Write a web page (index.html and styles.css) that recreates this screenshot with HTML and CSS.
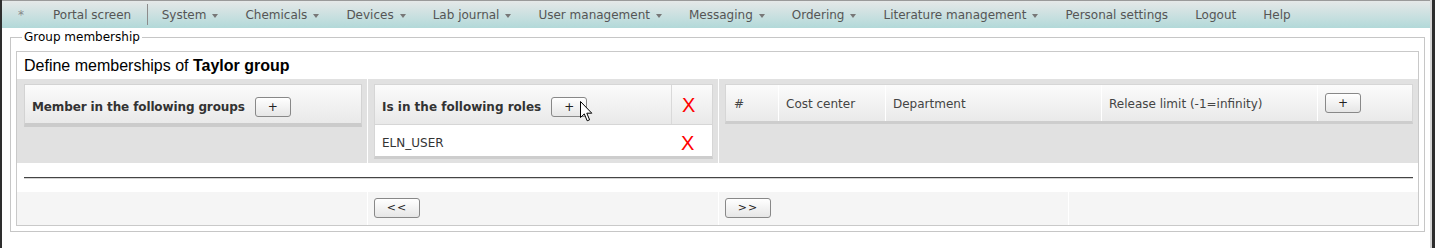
FILE: index.html
```html
<!DOCTYPE html>
<html lang="en">
<head>
<meta charset="utf-8">
<title>Group membership</title>
<link rel="stylesheet" href="styles.css">
</head>
<body>
<div class="frame">
  <div class="screen">
    <nav class="menu">
      <span class="item star">*</span>
      <span class="item portal">Portal screen</span>
      <span class="sep"></span>
      <span class="item">System<i class="caret"></i></span>
      <span class="item">Chemicals<i class="caret"></i></span>
      <span class="item">Devices<i class="caret"></i></span>
      <span class="item">Lab journal<i class="caret"></i></span>
      <span class="item">User management<i class="caret"></i></span>
      <span class="item">Messaging<i class="caret"></i></span>
      <span class="item">Ordering<i class="caret"></i></span>
      <span class="item">Literature management<i class="caret"></i></span>
      <span class="item">Personal settings</span>
      <span class="item">Logout</span>
      <span class="item">Help</span>
    </nav>

    <fieldset class="group">
      <legend>Group membership</legend>
      <div class="box">
        <div class="title">Define memberships of <b>Taylor group</b></div>

        <div class="grid">
          <div class="cell c1">
            <div class="panel">
              <span class="ph">Member in the following groups</span>
              <button class="btn" type="button">+</button>
            </div>
          </div>

          <div class="cell c2">
            <div class="roles">
              <div class="rrow head">
                <div class="rname"><span class="ph">Is in the following roles</span><button class="btn" type="button">+</button></div>
                <div class="rx">X</div>
              </div>
              <div class="rrow body">
                <div class="rname">ELN_USER</div>
                <div class="rx">X</div>
              </div>
            </div>
            <svg class="cursor" viewBox="0 0 13 21" width="13" height="21" aria-hidden="true">
              <path d="M0.5 0.5 L0.5 16.5 L4.3 12.9 L7.2 19.8 L9.6 18.8 L6.8 12.2 L11.8 12.2 Z" fill="#fff" stroke="#000" stroke-width="1" stroke-linejoin="round"/>
            </svg>
          </div>

          <div class="cell c3">
            <div class="ctable">
              <div class="ch txt first">#</div>
              <div class="ch txt">Cost center</div>
              <div class="ch txt">Department</div>
              <div class="ch txt">Release limit (-1=infinity)</div>
              <div class="ch"><button class="btn flat" type="button">+</button></div>
            </div>
          </div>
        </div>

        <div class="rule"><hr></div>

        <div class="foot">
          <div class="fcell"></div>
          <div class="fcell"><button class="btn pager" type="button">&lt;&lt;</button></div>
          <div class="fcell"><button class="btn pager" type="button">&gt;&gt;</button></div>
          <div class="fcell"></div>
        </div>
      </div>
    </fieldset>
  </div>
</div>
</body>
</html>
```

FILE: styles.css
```css
* {
  box-sizing: border-box;
}

html,
body {
  margin: 0;
  padding: 0;
  background: #fff;
}

body {
  font-family: "DejaVu Sans", Verdana, sans-serif;
  font-size: 12px;
  color: #333;
}

.frame {
  display: flex;
  height: 248px;
  border-left: 2px solid #2e2e2e;
  border-right: 3px solid #2e2e2e;
  overflow: hidden;
}

.screen {
  flex: 1;
  min-width: 0;
  border-right: 2px solid #d6d6d6;
  display: flex;
  flex-direction: column;
}

/* ---------- top menu ---------- */
.menu {
  display: flex;
  height: 28px;
  border-top: 1px solid #9a9a9a;
  padding-top: 2px;
  line-height: 25px;
  background: linear-gradient(#e5e8e8, #b2d9d9);
  color: #555;
  white-space: nowrap;
}

.item {
  display: flex;
  align-items: center;
  padding: 0 13.5px;
}

.item.star {
  padding: 0 16px;
  color: #888;
}

.item.portal {
  padding-left: 13px;
  padding-right: 16px;
}

.sep {
  align-self: flex-start;
  margin-top: 1px;
  width: 1px;
  height: 21px;
  background: #8c8c8c;
}

.caret {
  display: inline-block;
  width: 0;
  height: 0;
  margin-left: 6px;
  margin-top: 1px;
  border-left: 3.5px solid transparent;
  border-right: 3.5px solid transparent;
  border-top: 4px solid #777;
}

/* ---------- fieldset ---------- */
.group {
  min-width: 0;
  margin: 2px 5px 0 8px;
  padding: 7px 5px 5px;
  border: 1px solid #c6c6c6;
}

.group legend {
  margin-left: 6px;
  padding: 0 2px;
  line-height: 14px;
  font-size: 12px;
  color: #000;
}

.box {
  border: 1px solid #c9c9c9;
}

.title {
  height: 27px;
  line-height: 27px;
  padding-left: 7px;
  font-family: "Liberation Sans", Arial, sans-serif;
  font-size: 16px;
  color: #000;
}

/* ---------- grey area ---------- */
.grid {
  display: grid;
  grid-template-columns: 350px 350px 1fr;
  column-gap: 1px;
  background: #fff;
}

.cell {
  background: #e1e1e1;
  padding: 5px 5px 4px 6px;
}

.c1 {
  padding-left: 7px;
}

.c2 {
  position: relative;
}

.panel {
  display: flex;
  align-items: center;
  height: 43px;
  padding: 5px 0 0 7px;
  border: 1px solid #d3d3d3;
  border-bottom: 4px solid #cbcbcb;
  background: linear-gradient(#fbfbfb, #e9e9e9);
}

.ph {
  font-weight: bold;
  color: #333;
}

.panel .ph {
  letter-spacing: -0.12px;
}

.btn {
  margin-left: 10px;
  width: 36px;
  height: 20px;
  padding: 0;
  border: 1px solid #888;
  border-radius: 3px;
  background: linear-gradient(#ffffff, #e6e6e6);
  font-family: "DejaVu Sans", Verdana, sans-serif;
  font-size: 12px;
  line-height: 18px;
  color: #222;
}

.btn.flat {
  margin-left: 0;
}

/* roles table */
.roles {
  border: 1px solid #d6d6d6;
  border-bottom: 3px solid #cdcdcd;
  background: #fff;
}

.rrow {
  display: flex;
}

.rrow.head {
  height: 40px;
  border-bottom: 1px solid #d6d6d6;
  background: linear-gradient(#fbfbfb, #e9e9e9);
}

.rrow.body {
  height: 31px;
  padding-top: 5px;
}

.rname {
  flex: 1;
  display: flex;
  align-items: center;
  padding-left: 7px;
}

.rrow.head .rname {
  padding-top: 4px;
}

.rx {
  width: 41px;
  display: flex;
  align-items: center;
  padding-left: 10px;
  font-family: "Liberation Sans", Arial, sans-serif;
  font-size: 20px;
  color: #f00;
}

.rrow.head .rx {
  border-left: 1px solid #d9d9d9;
  padding-top: 2px;
}

.cursor {
  position: absolute;
  left: 212px;
  top: 22px;
}

/* cost center table */
.ctable {
  display: grid;
  grid-template-columns: 52px 107px 216px 216px 1fr;
  height: 40px;
  border: 1px solid #d6d6d6;
  border-bottom: 3px solid #cdcdcd;
  background: linear-gradient(#fbfbfb, #e9e9e9);
}

.ch {
  display: flex;
  align-items: center;
  padding-left: 7px;
  border-left: 1px solid #fff;
  color: #444;
}

.ch.txt {
  padding-top: 2px;
}

.ch.first {
  border-left: none;
  padding-left: 8px;
}

/* ---------- rule + footer ---------- */
.rule {
  height: 29px;
  padding: 14px 5px 0 7px;
  background: #fff;
}

.rule hr {
  margin: 0;
  height: 0;
  border: 0;
  border-top: 1px solid #444;
  border-bottom: 1px solid #d4d4d4;
}

.foot {
  display: grid;
  grid-template-columns: 350px 350px 349px 1fr;
  column-gap: 1px;
  height: 33px;
  background: #fff;
}

.fcell {
  background: #f5f5f5;
  padding: 6px 0 0 6px;
}

.btn.pager {
  margin-left: 0;
  width: 46px;
  height: 20px;
  font-size: 11px;
  letter-spacing: 1px;
}
```
